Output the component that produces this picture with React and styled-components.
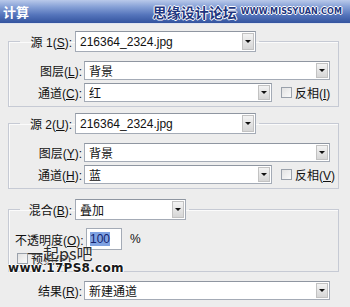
import React from 'react';
import styled, { createGlobalStyle } from 'styled-components';

const GlobalStyle = createGlobalStyle`
  html, body {
    margin: 0;
    padding: 0;
    background: #ededed;
  }
  body {
    font-family: "Liberation Sans", "Noto Sans CJK SC", sans-serif;
    font-size: 12px;
    color: #111;
  }
`;

const Window = styled.div`
  width: 350px;
  height: 307px;
  background: #ededed;
  overflow: hidden;
  position: relative;
`;

const TitleBar = styled.div`
  height: 24px;
  display: flex;
  align-items: center;
  justify-content: space-between;
  padding: 0 8px 0 3px;
  box-sizing: border-box;
  background: linear-gradient(to bottom, #b9c9ea 0%, #86a0d6 30%, #5474bb 65%, #34549f 100%);
  border-bottom: 1px solid #dfe4ef;
`;

const Title = styled.span`
  color: #fff;
  font-weight: bold;
  font-size: 13px;
  font-family: "Noto Sans CJK SC", sans-serif;
`;

const Mark = styled.div`
  display: flex;
  align-items: center;
  gap: 4px;
`;

const MarkCn = styled.span`
  font-family: "Noto Sans CJK SC", sans-serif;
  font-size: 14px;
  font-weight: bold;
  color: #1e3680;
  text-shadow: -1px 0 #fff, 1px 0 #fff, 0 -1px #fff, 0 1px #fff;
`;

const MarkEn = styled.span`
  font-family: "DejaVu Sans", sans-serif;
  font-size: 8px;
  font-weight: bold;
  color: #1e3680;
  letter-spacing: 0.1px;
  text-shadow: -1px 0 #fff, 1px 0 #fff, 0 -1px #fff, 0 1px #fff;
`;

const Body = styled.div`
  padding: 7px 11px 0 8px;
  display: flex;
  flex-direction: column;
`;

const Group = styled.fieldset`
  margin: ${p => p.$top || 0}px 0 0 0;
  padding: ${p => p.$pt || 8}px 0 ${p => p.$pb || 4}px 0;
  border: 1px solid #c6cad4;
  box-shadow: inset 1px 1px 0 #fbfbfb;
  min-inline-size: 0;
  display: flex;
  flex-direction: column;
  gap: 3px;
`;

const Legend = styled.legend`
  margin-left: 11px;
  padding: 0 3px 0 0;
  display: flex;
  align-items: center;
`;

const LegendLabel = styled.span`
  width: 52px;
  text-align: right;
  margin-right: 3px;
  white-space: nowrap;
`;

const Row = styled.div`
  display: flex;
  align-items: center;
  height: ${p => (p.$h ? `${p.$h}px` : 'auto')};
  padding-left: ${p => p.$pl || 0}px;
`;

const Label = styled.span`
  width: ${p => p.$w || 73}px;
  text-align: ${p => p.$align || 'right'};
  margin-right: 2px;
  white-space: nowrap;
`;

const U = styled.span`
  text-decoration: underline;
`;

const ComboBox = styled.div`
  width: ${p => p.$w}px;
  height: ${p => p.$h || 19}px;
  box-sizing: border-box;
  background: #fff;
  border: 1px solid #a4abb6;
  border-top-color: #8f96a1;
  display: flex;
  align-items: center;
`;

const ComboText = styled.span`
  flex: 1;
  padding-left: 4px;
  white-space: nowrap;
  overflow: hidden;
`;

const DropButton = styled.span`
  width: 12px;
  align-self: stretch;
  margin: 1px;
  background: linear-gradient(to bottom, #f3f3f3, #d6d6d6);
  border: 1px solid #c2c2c2;
  box-sizing: border-box;
  display: flex;
  align-items: center;
  justify-content: center;
  &::after {
    content: '';
    border-left: 3px solid transparent;
    border-right: 3px solid transparent;
    border-top: 3px solid #111;
  }
`;

const Check = styled.span`
  flex: none;
  width: 11px;
  height: 11px;
  box-sizing: border-box;
  border: 1px solid #9aa1ab;
  background: linear-gradient(to bottom right, #e2e2e2, #fafafa);
  margin: 0 3px 0 ${p => p.$ml || 0}px;
`;

const Field = styled.div`
  width: 36px;
  height: 22px;
  box-sizing: border-box;
  border: 1px solid #a4abb6;
  background: #fff;
  display: flex;
  align-items: center;
  padding-left: 3px;
`;

const Selected = styled.span`
  background: #7fa2e2;
  color: #13236e;
  line-height: 14px;
`;

const Percent = styled.span`
  margin-left: 8px;
`;

const ResultRow = styled(Row)`
  margin-top: 9px;
  padding-left: 1px;
`;

const Watermark = styled.div`
  position: absolute;
  left: 8px;
  top: 244px;
  display: flex;
  flex-direction: column;
  pointer-events: none;
`;

const WmCn = styled.span`
  margin-left: 19px;
  font-family: "Noto Sans CJK SC", sans-serif;
  font-size: 16px;
  line-height: 18px;
  color: #2b2b2b;
  text-shadow: 0 0 2px #fff;
`;

const WmUrl = styled.span`
  font-family: "DejaVu Sans", sans-serif;
  font-weight: bold;
  font-size: 12px;
  line-height: 12px;
  color: #1a1a1a;
  letter-spacing: 0.3px;
  text-shadow: -1px 0 #fff, 1px 0 #fff, 0 -1px #fff, 0 1px #fff;
`;

function Combo({ w, h, children }) {
  return (
    <ComboBox $w={w} $h={h}>
      <ComboText>{children}</ComboText>
      <DropButton />
    </ComboBox>
  );
}

function SourceGroup({ num, keys, top }) {
  return (
    <Group $top={top} $pt={9} $pb={4}>
      <Legend>
        <LegendLabel>源 {num}(<U>{keys[0]}</U>):</LegendLabel>
        <Combo w={181} h={21}>216364_2324.jpg</Combo>
      </Legend>
      <Row>
        <Label>图层(<U>{keys[1]}</U>):</Label>
        <Combo w={246}>背景</Combo>
      </Row>
      <Row>
        <Label>通道(<U>{keys[2]}</U>):</Label>
        <Combo w={188}>{keys[4]}</Combo>
        <Check $ml={9} />
        <span>反相(<U>{keys[3]}</U>)</span>
      </Row>
    </Group>
  );
}

export default function App() {
  return (
    <Window>
      <GlobalStyle />
      <TitleBar>
        <Title>计算</Title>
        <Mark>
          <MarkCn>思缘设计论坛</MarkCn>
          <MarkEn>WWW.MISSYUAN.COM</MarkEn>
        </Mark>
      </TitleBar>
      <Body>
        <SourceGroup num={1} keys={['S', 'L', 'C', 'I', '红']} />
        <SourceGroup num={2} keys={['U', 'Y', 'H', 'V', '蓝']} top={6} />
        <Group $top={10} $pt={8} $pb={7}>
          <Legend>
            <LegendLabel>混合(<U>B</U>):</LegendLabel>
            <Combo w={111} h={21}>叠加</Combo>
          </Legend>
          <Row $pl={6} $h={22}>
            <Label $w={69} $align="left">不透明度(<U>O</U>):</Label>
            <Field><Selected>100</Selected></Field>
            <Percent>%</Percent>
          </Row>
          <Row $pl={8} $h={11}>
            <Check />
            <span>预览(<U>P</U>)</span>
          </Row>
        </Group>
        <ResultRow>
          <Label>结果(<U>R</U>):</Label>
          <Combo w={246}>新建通道</Combo>
        </ResultRow>
      </Body>
      <Watermark>
        <WmCn>一起ps吧</WmCn>
        <WmUrl>www.17PS8.com</WmUrl>
      </Watermark>
    </Window>
  );
}
